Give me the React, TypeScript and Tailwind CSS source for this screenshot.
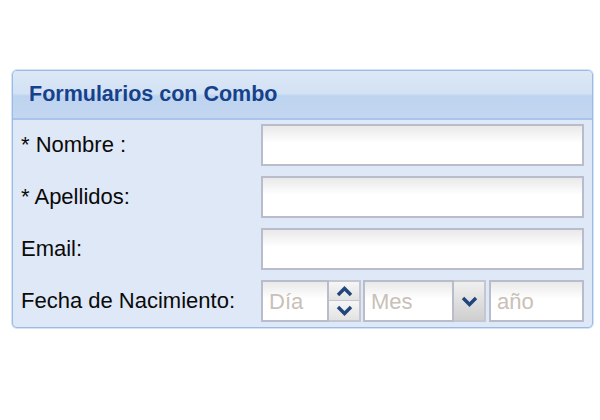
import React from "react";

const inputCls =
  "h-[42px] border-2 border-[#b9bccb] bg-[linear-gradient(to_bottom,#e9e9e9_0%,#ffffff_45%,#ffffff_100%)]";

function Chevron({ dir }: { dir: "up" | "down" }) {
  return (
    <svg width="17" height="11" viewBox="0 0 17 11">
      {dir === "up" ? (
        <path d="M2 9 L8.5 2.5 L15 9" fill="none" stroke="#22457d" strokeWidth="3.4" strokeLinejoin="miter" />
      ) : (
        <path d="M2 2 L8.5 8.5 L15 2" fill="none" stroke="#22457d" strokeWidth="3.4" strokeLinejoin="miter" />
      )}
    </svg>
  );
}

function Row({ label, children }: { label: string; children: React.ReactNode }) {
  return (
    <div className="flex items-center h-[42px]">
      <div className="w-[240px] text-[22px] text-[#0a0a0a] leading-none">{label}</div>
      <div className="flex-1 flex">{children}</div>
    </div>
  );
}

export default function App() {
  return (
    <div className="w-[600px] h-[420px] bg-white pt-[70px] pl-[12px]" style={{ fontFamily: "Tahoma, 'Liberation Sans', Arial, sans-serif" }}>
      <div className="w-[581px] h-[258px] border border-[#99bbe8] rounded-[5px] bg-[#dfe8f6] overflow-hidden flex flex-col shadow-[0_0_0_1px_#d6e3f5]">
        <div className="h-[49px] border-b-2 border-[#a8c4ea] bg-[linear-gradient(to_bottom,#dde8f6_0%,#d2e1f4_48%,#bed3ef_53%,#c3d7f1_100%)] flex items-center pl-[16px]">
          <span className="text-[21.5px] font-bold text-[#15428b]">Formularios con Combo</span>
        </div>
        <div className="flex flex-col gap-[10px] pt-[4px] pl-[8px] pr-[8px]">
          <Row label="* Nombre :">
            <div className={inputCls + " flex-1"} />
          </Row>
          <Row label="* Apellidos:">
            <div className={inputCls + " flex-1"} />
          </Row>
          <Row label="Email:">
            <div className={inputCls + " flex-1"} />
          </Row>
          <Row label="Fecha de Nacimiento:">
            <div className={inputCls + " w-[68px] flex items-center pl-[6px] text-[22px] text-[#c9c0b8]"}>Día</div>
            <div className="w-[32px] h-[42px] flex flex-col border-2 border-l-0 border-[#c4c6d0]">
              <div className="h-1/2 flex items-center justify-center bg-[linear-gradient(to_bottom,#f6f6f6,#e2e2e2)] border-b border-[#c4c6d0]">
                <Chevron dir="up" />
              </div>
              <div className="h-1/2 flex items-center justify-center bg-[linear-gradient(to_bottom,#f6f6f6,#e2e2e2)]">
                <Chevron dir="down" />
              </div>
            </div>
            <div className={inputCls + " ml-[2px] w-[91px] flex items-center pl-[6px] text-[22px] text-[#c9c0b8]"}>Mes</div>
            <div className="w-[32px] h-[42px] flex items-center justify-center border-2 border-l-0 border-[#c4c6d0] bg-[linear-gradient(to_bottom,#f0f0f0,#cfcfcf)]">
              <Chevron dir="down" />
            </div>
            <div className={inputCls + " ml-[3px] flex-1 flex items-center pl-[6px] text-[22px] text-[#c9c0b8]"}>año</div>
          </Row>
        </div>
      </div>
    </div>
  );
}
